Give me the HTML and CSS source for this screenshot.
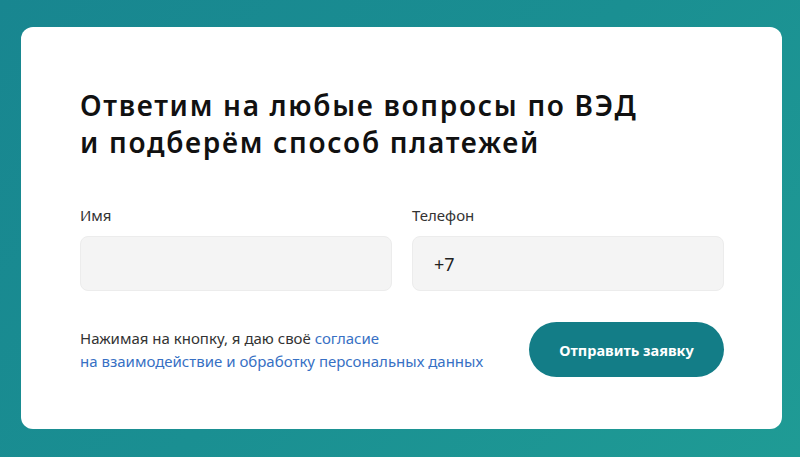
FILE: index.html
```html
<!DOCTYPE html>
<html lang="ru">
<head>
<meta charset="utf-8">
<title>Заявка</title>
<link rel="stylesheet" href="styles.css">
</head>
<body>
<main class="page">
  <section class="card">
    <h1 class="title">Ответим на любые вопросы по ВЭД<br>и подберём способ платежей</h1>
    <form class="form">
      <div class="fields">
        <label class="field">
          <span class="label">Имя</span>
          <input class="input" type="text" value="">
        </label>
        <label class="field">
          <span class="label">Телефон</span>
          <input class="input" type="text" value="+7">
        </label>
      </div>
      <div class="footer">
        <p class="consent">Нажимая на кнопку, я даю своё <a href="#" class="link">согласие<br>на взаимодействие и обработку персональных данных</a></p>
        <button type="button" class="btn">Отправить заявку</button>
      </div>
    </form>
  </section>
</main>
</body>
</html>
```
FILE: styles.css
```css
* { box-sizing: border-box; }
html, body { margin: 0; height: 100%; }
body {
  background: linear-gradient(135deg, #188690 0%, #1a8f92 50%, #1f9b95 100%);
  font-family: "Noto Sans", "Open Sans", sans-serif;
}
.page {
  height: 457px;
  padding: 27px 18px 28px 21px;
}
.card {
  height: 100%;
  background: #fff;
  border-radius: 12px;
  padding: 60px 58px 0 59px;
}
.title {
  margin: 0;
  font-family: "Noto Sans", sans-serif;
  font-weight: 600;
  font-size: 28px;
  line-height: 37px;
  letter-spacing: 1.7px;
  color: #111;
}
.form { margin-top: 44px; }
.fields {
  display: grid;
  grid-template-columns: 1fr 1fr;
  gap: 20px;
}
.field { display: flex; flex-direction: column; }
.label {
  font-size: 15px;
  line-height: 20px;
  color: #333;
  margin-bottom: 11px;
}
.input {
  height: 55px;
  border: 1px solid #ececec;
  background: #f4f4f4;
  border-radius: 8px;
  padding: 0 21px;
  font-family: "Noto Sans", sans-serif;
  font-size: 18px;
  color: #222;
  outline: none;
}
.footer {
  margin-top: 31px;
  display: flex;
  justify-content: space-between;
  align-items: center;
}
.consent {
  margin: 0;
  font-size: 15px;
  line-height: 23px;
  color: #333;
}
.link { color: #3770c4; text-decoration: none; }
.btn {
  width: 195px;
  height: 55px;
  border: 0;
  border-radius: 28px;
  background: #137d87;
  color: #fff;
  font-family: "Noto Sans", sans-serif;
  font-weight: 700;
  font-size: 14.5px;
  cursor: pointer;
}
```
